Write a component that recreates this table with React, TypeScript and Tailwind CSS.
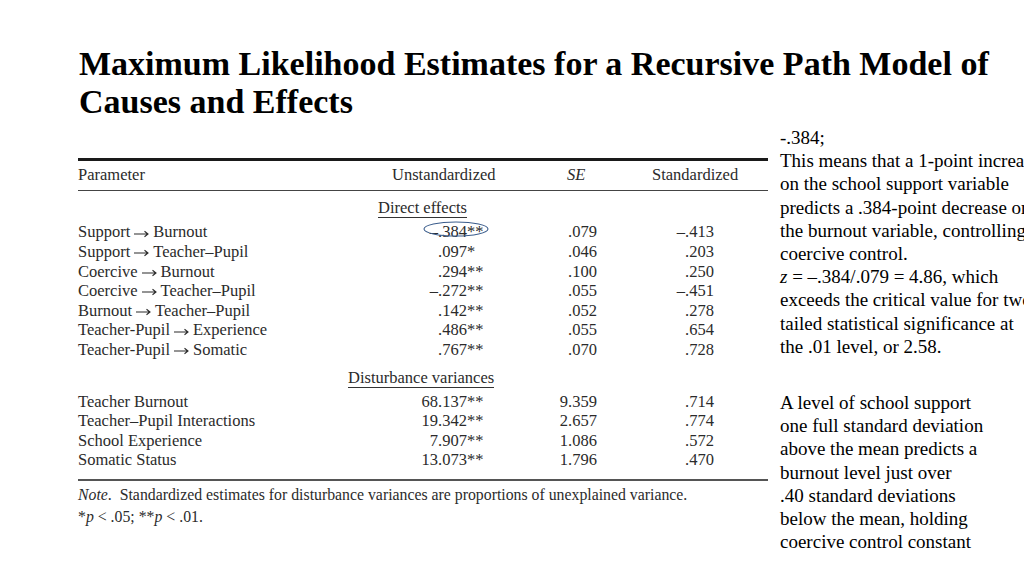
import React from "react";

const serif = { fontFamily: '"Liberation Serif", "Times New Roman", serif' };

type Row = { p: React.ReactNode; u: [string, string]; se: [string, string]; st: [string, string] };

const A = () => (
  <svg className="mx-[4px] inline-block align-middle" width="15" height="8" viewBox="0 0 15 8">
    <path d="M0 4H14M10.5 1.2L14 4L10.5 6.8" fill="none" stroke="#2b2b2b" strokeWidth="1.1" />
  </svg>
);

const direct: Row[] = [
  { p: <>Support<A />Burnout</>, u: ["\u2013", ".384**"], se: ["", ".079"], st: ["\u2013", ".413"] },
  { p: <>Support<A />Teacher{"\u2013"}Pupil</>, u: ["", ".097*"], se: ["", ".046"], st: ["", ".203"] },
  { p: <>Coercive<A />Burnout</>, u: ["", ".294**"], se: ["", ".100"], st: ["", ".250"] },
  { p: <>Coercive<A />Teacher{"\u2013"}Pupil</>, u: ["\u2013", ".272**"], se: ["", ".055"], st: ["\u2013", ".451"] },
  { p: <>Burnout<A />Teacher{"\u2013"}Pupil</>, u: ["", ".142**"], se: ["", ".052"], st: ["", ".278"] },
  { p: <>Teacher-Pupil<A />Experience</>, u: ["", ".486**"], se: ["", ".055"], st: ["", ".654"] },
  { p: <>Teacher-Pupil<A />Somatic</>, u: ["", ".767**"], se: ["", ".070"], st: ["", ".728"] },
];

const dist: Row[] = [
  { p: "Teacher Burnout", u: ["68", ".137**"], se: ["9", ".359"], st: ["", ".714"] },
  { p: "Teacher\u2013Pupil Interactions", u: ["19", ".342**"], se: ["2", ".657"], st: ["", ".774"] },
  { p: "School Experience", u: ["7", ".907**"], se: ["1", ".086"], st: ["", ".572"] },
  { p: "Somatic Status", u: ["13", ".073**"], se: ["1", ".796"], st: ["", ".470"] },
];

function DataRow({ r, circle }: { r: Row; circle?: boolean }) {
  return (
    <div className="flex h-[19.6px] items-center">
      <div className="w-[300px] shrink-0 whitespace-nowrap">{r.p}</div>
      <div className="relative flex w-[120px] shrink-0">
        <span className="w-[60px] text-right">{r.u[0]}</span>
        <span className="w-[60px]">{r.u[1]}</span>
        {circle && (
          <svg className="absolute left-[45px] top-[1px]" width="66" height="16" viewBox="0 0 66 16">
            <ellipse cx="33" cy="8" rx="32" ry="7" fill="none" stroke="#3b5d8c" strokeWidth="1.1" />
          </svg>
        )}
      </div>
      <div className="flex w-[130px] shrink-0">
        <span className="w-[70px] text-right">{r.se[0]}</span>
        <span className="w-[60px]">{r.se[1]}</span>
      </div>
      <div className="flex w-[140px] shrink-0">
        <span className="w-[57px] text-right">{r.st[0]}</span>
        <span className="w-[83px]">{r.st[1]}</span>
      </div>
    </div>
  );
}

export default function App() {
  return (
    <div className="w-[1024px] h-[576px] overflow-hidden bg-white text-black" style={serif}>
      <div className="pl-[79px] pt-[45px]">
        <h1 className="whitespace-nowrap text-[34px] font-bold leading-[38px]">
          Maximum Likelihood Estimates for a Recursive Path Model of
          <br />
          Causes and Effects
        </h1>
      </div>
      <div className="flex items-start pl-[78px]">
        <div className="mt-[37px] w-[690px] shrink-0 text-[16.5px] text-[#2b2b2b]">
          <div className="h-[3px] bg-[#1a1a1a]" />
          <div className="flex h-[30px] items-center border-b border-[#444]">
            <div className="w-[314px] shrink-0">Parameter</div>
            <div className="w-[175px] shrink-0">Unstandardized</div>
            <div className="w-[85px] shrink-0 italic">SE</div>
            <div>Standardized</div>
          </div>
          <div className="flex h-[32px] items-center pl-[300px] pt-[2px]">
            <span className="border-b border-[#333] leading-[19px]">Direct effects</span>
          </div>
          {direct.map((r, i) => (
            <DataRow key={i} r={r} circle={i === 0} />
          ))}
          <div className="flex h-[32px] items-center pl-[270px] pt-[4px]">
            <span className="border-b border-[#333] leading-[19px]">Disturbance variances</span>
          </div>
          {dist.map((r, i) => (
            <DataRow key={i} r={r} />
          ))}
          <div className="mt-[8px] h-[2px] bg-[#555]" />
          <div className="mt-[3px] h-[21px] whitespace-nowrap text-[15.8px] leading-[21px]">
            <i>Note</i>.&nbsp; Standardized estimates for disturbance variances are proportions of unexplained variance.
          </div>
          <div className="mt-[1px] text-[15.8px] leading-[21px]">
            *<i>p</i> &lt; .05; **<i>p</i> &lt; .01.
          </div>
        </div>
        <div className="ml-[12px] mt-[5px] whitespace-nowrap text-[19px] leading-[23.2px]">
          <div>-.384;</div>
          <div>This means that a 1-point increase</div>
          <div>on the school support variable</div>
          <div>predicts a .384-point decrease on</div>
          <div>the burnout variable, controlling for</div>
          <div>coercive control.</div>
          <div>
            <i>z</i> = &#8211;.384/.079 = 4.86, which
          </div>
          <div>exceeds the critical value for two-</div>
          <div>tailed statistical significance at</div>
          <div>the .01 level, or 2.58.</div>
          <div className="mt-[33px]">A level of school support</div>
          <div>one full standard deviation</div>
          <div>above the mean predicts a</div>
          <div>burnout level just over</div>
          <div>.40 standard deviations</div>
          <div>below the mean, holding</div>
          <div>coercive control constant</div>
        </div>
      </div>
    </div>
  );
}
